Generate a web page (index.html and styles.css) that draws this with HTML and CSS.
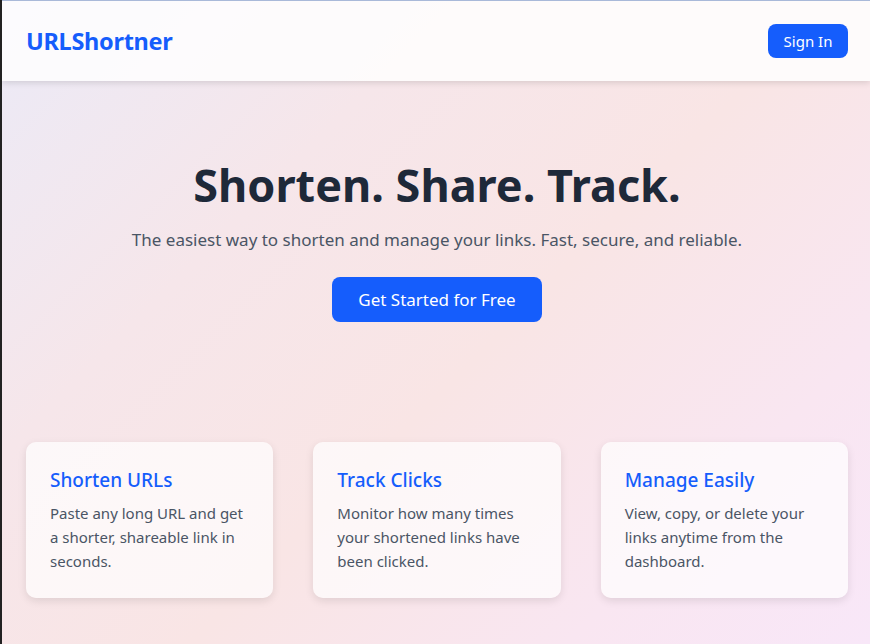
FILE: index.html
```html
<!DOCTYPE html>
<html lang="en">
<head>
<meta charset="utf-8">
<title>URLShortner</title>
<link rel="stylesheet" href="styles.css">
</head>
<body>
<div class="page">
  <header class="nav">
    <a class="logo" href="#">URLShortner</a>
    <a class="btn btn-sm" href="#">Sign In</a>
  </header>
  <main class="main">
    <section class="hero">
      <h1 class="hero-title">Shorten. Share. Track.</h1>
      <p class="hero-sub">The easiest way to shorten and manage your links. Fast, secure, and reliable.</p>
      <a class="btn btn-lg" href="#">Get Started for Free</a>
    </section>
    <section class="features">
      <div class="card">
        <h3 class="card-title">Shorten URLs</h3>
        <p class="card-text">Paste any long URL and get a shorter, shareable link in seconds.</p>
      </div>
      <div class="card">
        <h3 class="card-title">Track Clicks</h3>
        <p class="card-text">Monitor how many times your shortened links have been clicked.</p>
      </div>
      <div class="card">
        <h3 class="card-title">Manage Easily</h3>
        <p class="card-text">View, copy, or delete your links anytime from the dashboard.</p>
      </div>
    </section>
  </main>
</div>
</body>
</html>
```

FILE: styles.css
```css
* { box-sizing: border-box; }
html, body { margin: 0; padding: 0; height: 100%; }
body {
  font-family: "Noto Sans", "Open Sans", sans-serif;
  color: #1e2939;
  background: #222;
}
.page {
  min-height: 644px;
  margin-left: 2px;
  border-top: 1px solid #a9b9d9;
  background: linear-gradient(135deg, #ebeaf7 0%, #f6e6ea 30%, #f9e5e5 55%, #f9e6f1 80%, #f8e7f8 100%);
  overflow: hidden;
}
.nav {
  height: 80px;
  display: flex;
  align-items: center;
  justify-content: space-between;
  padding: 0 22px 0 24px;
  background: rgba(255, 255, 255, 0.82);
  box-shadow: 0 2px 6px rgba(0, 0, 0, 0.12);
}
.logo {
  font-size: 23.5px;
  font-weight: 700;
  color: #155dfc;
  text-decoration: none;
  letter-spacing: -0.3px;
}
.btn {
  display: inline-flex;
  align-items: center;
  justify-content: center;
  background: #155dfc;
  color: #fff;
  text-decoration: none;
  border-radius: 8px;
}
.btn-sm {
  width: 80px;
  height: 34px;
  font-size: 15px;
}
.main {
  padding: 0 22px 0 24px;
}
.hero {
  display: flex;
  flex-direction: column;
  align-items: center;
  padding-top: 72px;
}
.hero-title {
  margin: 0;
  font-size: 45px;
  line-height: 64px;
  font-weight: 700;
  color: #1e2939;
}
.hero-sub {
  margin: 9px 0 0;
  font-size: 17px;
  line-height: 28px;
  color: #4a5565;
}
.btn-lg {
  margin-top: 23px;
  width: 210px;
  height: 45px;
  font-size: 17px;
}
.features {
  margin-top: 120px;
  display: grid;
  grid-template-columns: repeat(3, 1fr);
  gap: 40px;
}
.card {
  height: 156px;
  padding: 24px;
  background: rgba(255, 255, 255, 0.7);
  border-radius: 10px;
  box-shadow: 0 3px 8px rgba(0, 0, 0, 0.1);
}
.card-title {
  margin: 0 0 7px;
  font-size: 19px;
  line-height: 28px;
  font-weight: 500;
  color: #155dfc;
}
.card-text {
  margin: 0;
  font-size: 15px;
  line-height: 24px;
  color: #4a5565;
}
```
